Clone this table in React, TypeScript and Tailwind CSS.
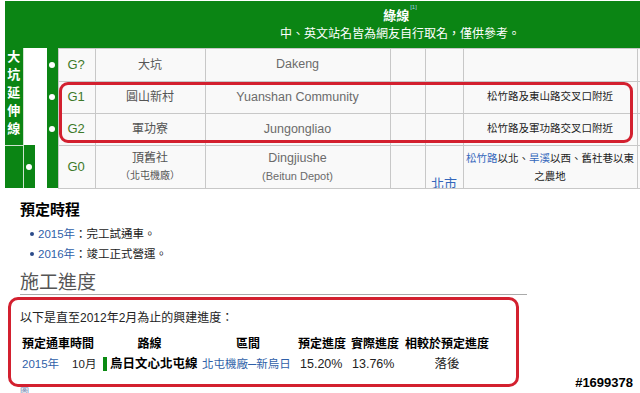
import React from "react";

// 綠線 大坑延伸線 站點表 + 施工進度
const green = "bg-[#0b8514]";
const cell = "border border-[#c8c8c8] bg-[#f9f9f9]";
const code = "border border-[#c8c8c8] bg-[#f9f9f9] pl-[9px] text-left text-[13px] text-[#3d7a2a]";
const zh = "border border-[#c8c8c8] bg-[#f9f9f9] text-center text-[12px] text-[#555]";
const en = "border border-[#c8c8c8] bg-[#f9f9f9] text-center text-[12.5px] text-[#6b6b6b]";
const addr = "border border-[#c8c8c8] bg-[#f9f9f9] text-center text-[10.5px] text-[#222] whitespace-nowrap";

const Dot = () => <span className="mx-auto block h-[6px] w-[6px] rounded-full bg-white" />;

const Station = ({ id, name, roman, where }: { id: string; name: string; roman: string; where?: string }) => (
  <>
    <td className={green}>
      <Dot />
    </td>
    <td className={code}>{id}</td>
    <td className={zh}>{name}</td>
    <td className={en}>{roman}</td>
    <td className={cell}></td>
    <td className={cell}></td>
    <td className={addr}>{where}</td>
    <td className={cell}></td>
  </>
);

export default function App() {
  return (
    <div className="relative h-[393px] w-[640px] overflow-hidden bg-white font-['Liberation_Sans','Noto_Sans_CJK_TC',sans-serif] text-black">
      <table className="ml-[5px] mt-px w-[790px] table-fixed border-collapse">
        <colgroup>
          <col className="w-[18px]" />
          <col className="w-[12px]" />
          <col className="w-[12px]" />
          <col className="w-[11px]" />
          <col className="w-[37px]" />
          <col className="w-[110px]" />
          <col className="w-[185px]" />
          <col className="w-[35px]" />
          <col className="w-[38px]" />
          <col className="w-[174px]" />
          <col className="w-[158px]" />
        </colgroup>
        <thead>
          <tr className="h-[47px]">
            <th colSpan={11} className={`${green} pt-[6px] align-top font-normal text-white`}>
              <div className="text-[13px] font-bold leading-[18px]">
                綠線<sup className="ml-px align-top text-[6px] font-normal leading-none text-[#a9c8f0]">[1]</sup>
              </div>
              <div className="text-[12px] leading-[18px]">中、英文站名皆為網友自行取名，僅供參考。</div>
            </th>
          </tr>
        </thead>
        <tbody>
          <tr className="h-[33px]">
            <td rowSpan={3} className={`${green} border-r border-[#cfe3cf] align-top text-center text-[13px] font-bold leading-[18px] text-white`}>
              大<br />坑<br />延<br />伸<br />線
            </td>
            <td rowSpan={3} colSpan={2} className="bg-white"></td>
            <Station id="G?" name="大坑" roman="Dakeng" />
          </tr>
          <tr className="h-[32px]">
            <Station id="G1" name="圓山新村" roman="Yuanshan Community" where="松竹路及東山路交叉口附近" />
          </tr>
          <tr className="h-[32px]">
            <Station id="G2" name="軍功寮" roman="Jungongliao" where="松竹路及軍功路交叉口附近" />
          </tr>
          <tr className="h-[43px]">
            <td className={`${green} border-t border-r border-[#cfe3cf]`}></td>
            <td className={green}>
              <Dot />
            </td>
            <td className="bg-white"></td>
            <td className={green}></td>
            <td className={code}>G0</td>
            <td className={zh}>
              <div className="leading-[18px]">頂舊社</div>
              <div className="text-[10px] leading-[18px]">（北屯機廠）</div>
            </td>
            <td className={en}>
              <div className="leading-[18px]">Dingjiushe</div>
              <div className="text-[11px] leading-[18px]">(Beitun Depot)</div>
            </td>
            <td className={cell}></td>
            <td className={`${cell} p-0 align-top`}>
              <div className="h-[42px] overflow-hidden pt-[30px] text-center text-[13px] leading-[16px] text-[#3366bb]">北市</div>
            </td>
            <td className={`${addr} leading-[18px]`}>
              <span className="text-[#3366bb]">松竹路</span>以北、<span className="text-[#3366bb]">旱溪</span>以西、舊社巷以東
              <br />
              之農地
            </td>
            <td className={cell}></td>
          </tr>
        </tbody>
      </table>

      <div className="pointer-events-none absolute left-[59px] top-[82px] h-[61px] w-[574px] rounded-[9px] border-[3px] border-[#d3202f]" />

      <div className="mt-[11px] pl-[20px]">
        <h3 className="text-[15px] font-bold leading-[20px]">預定時程</h3>
        <ul className="mt-[4px] pl-[10px] text-[11.5px] leading-[20px] text-[#222]">
          <li className="flex items-center">
            <span className="mr-[4px] h-[4px] w-[4px] rounded-full bg-[#2b4a8a]" />
            <span className="text-[#2f5fa8]">2015年</span>：完工試通車。
          </li>
          <li className="flex items-center">
            <span className="mr-[4px] h-[4px] w-[4px] rounded-full bg-[#2b4a8a]" />
            <span className="text-[#2f5fa8]">2016年</span>：竣工正式營運。
          </li>
        </ul>
        <h2 className="mt-[4px] w-[507px] border-b border-[#aaa] pt-[4px] font-['Liberation_Serif','Noto_Sans_CJK_TC',serif] text-[19px] leading-[22px] text-[#555]">
          施工進度
        </h2>
      </div>

      <div className="ml-[8px] mt-[2px] h-[90px] w-[511px] rounded-[10px] border-[3px] border-[#d3202f] pl-[9px] pt-[9px] text-[12px]">
        <p className="leading-[18px] text-[#222]">以下是直至2012年2月為止的興建進度：</p>
        <div className="ml-[2px] mt-[7px] grid grid-cols-[77px_101px_96px_52px_54px_90px] leading-[20px]">
          <div className="font-bold">預定通車時間</div>
          <div className="text-center font-bold">路線</div>
          <div className="text-center font-bold">區間</div>
          <div className="text-center font-bold">預定進度</div>
          <div className="text-center font-bold">實際進度</div>
          <div className="text-center font-bold">相較於預定進度</div>

          <div className="whitespace-nowrap text-[11.5px]">
            <span className="text-[#2f5fa8]">2015年</span>
            <span className="ml-[13px] text-[#222]">10月</span>
          </div>
          <div className="flex items-center whitespace-nowrap pl-[4px] text-[12.5px] font-bold">
            <span className="mr-[3px] h-[14px] w-[4px] bg-[#0b8a12]" />
            烏日文心北屯線
          </div>
          <div className="whitespace-nowrap pl-[2px] text-[11.5px] text-[#2f5fa8]">北屯機廠─新烏日</div>
          <div className="pl-[4px] text-[12.5px] text-[#222]">15.20%</div>
          <div className="pl-[4px] text-[12.5px] text-[#222]">13.76%</div>
          <div className="text-center text-[12.5px] text-[#222]">落後</div>
        </div>
      </div>
      <div className="pl-[20px] text-[9px] leading-[10px] text-[#6d7fae]">圖</div>

      <div className="absolute bottom-[2px] right-[7px] text-[13px] font-bold leading-[16px] text-black [text-shadow:1px_0_0_#fff,-1px_0_0_#fff,0_1px_0_#fff,0_-1px_0_#fff]">
        #1699378
      </div>
    </div>
  );
}
